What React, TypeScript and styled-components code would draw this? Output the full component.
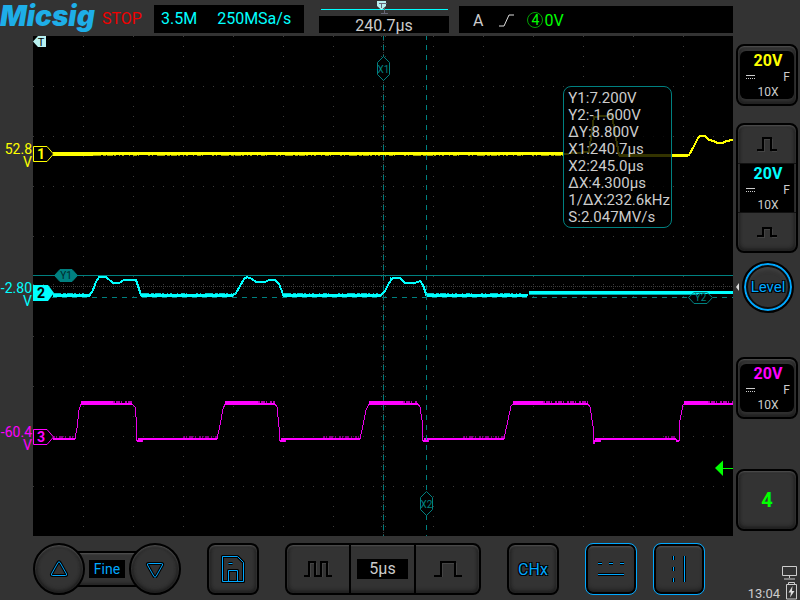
import React from "react";
import styled, { createGlobalStyle, css } from "styled-components";

const YELLOW = "#ffff00";
const CYAN = "#00ffff";
const MAGENTA = "#ff00ff";
const GREEN = "#00ff00";
const BLUE = "#00a8ff";
const TEAL = "#008080";

const GlobalStyle = createGlobalStyle`
  *, *::before, *::after { box-sizing: border-box; }
  body { margin: 0; background: #333; font-family: Roboto, "Liberation Sans", sans-serif; }
  button { font: inherit; color: inherit; padding: 0; cursor: pointer; }
  h1 { margin: 0; }
  svg { display: block; }
`;

const Page = styled.div`
  display: grid;
  grid-template-rows: 36px minmax(500px, 1fr) 64px;
  min-height: 100vh;
  background: #333;
  color: #ccc;
`;

/* ---------- header ---------- */

const Header = styled.header`
  display: grid;
  grid-template-columns: 102px 52px 150px 130px 1fr;
  padding-right: 67px;
`;

const Logo = styled.h1`
  font: italic 900 28px/32px Inter, sans-serif;
  color: #1eaee8;
`;

const RunState = styled.div`
  font-size: 16px;
  line-height: 38px;
  color: #f00000;
`;

const Readout = styled.div`
  display: flex;
  align-items: center;
  gap: 20px;
  height: 28px;
  margin-top: 5px;
  padding: 0 7px;
  background: #000;
  color: ${CYAN};
  font-size: 16px;
  line-height: 28px;
  white-space: nowrap;
`;

const Position = styled.div`
  display: flex;
  flex-direction: column;
  margin-left: 15px;
  margin-right: -15px;
`;

const PositionValue = styled.div`
  height: 17px;
  background: #000;
  font-size: 16px;
  line-height: 20px;
  text-align: center;
`;

const Trigger = styled.div`
  display: flex;
  align-items: center;
  height: 27px;
  margin: 6px 0 0 25px;
  padding: 1px 0 0 14px;
  background: #000;
  font-size: 16px;
`;

const TriggerLevel = styled.span`
  display: flex;
  align-items: center;
  gap: 1px;
  margin-left: 13px;
  color: ${GREEN};
`;

const Circled = styled.span`
  width: 16px;
  height: 16px;
  border: 1px solid #00a000;
  border-radius: 50%;
  font-size: 14px;
  line-height: 14px;
  text-align: center;
`;

const EdgeIcon = styled.svg`
  margin-left: 16px;
`;

/* ---------- main area ---------- */

const Main = styled.main`
  display: grid;
  grid-template-columns: 33px 1fr 67px;
`;

const Gutter = styled.div`
  position: relative;
`;

const LevelReading = styled.div<{ $color: string }>`
  position: absolute;
  right: 1px;
  color: ${(p) => p.$color};
  font-size: 14px;
  line-height: 13px;
  text-align: right;
`;

const Screen = styled.section`
  position: relative;
  background: #000;
`;

const Plot = styled.svg`
  position: absolute;
  inset: 0;
  width: 100%;
  height: 100%;
`;

const Measurements = styled.div`
  position: absolute;
  top: 50px;
  right: 61px;
  padding: 3px 1px 1px 4px;
  border: 1px solid ${TEAL};
  border-radius: 8px;
  background: rgba(0, 0, 0, 0.8);
  font-size: 15px;
  line-height: 17px;
  white-space: nowrap;
`;

const Side = styled.aside`
  display: grid;
  grid-template-rows: 79px 138px 96px 112px 62px;
  align-items: start;
  padding: 8px 2px 0 3px;
`;

const raised = css`
  border: 2px solid #000;
  border-radius: 8px;
  background: #333;
  box-shadow: inset 0 1px 2px #555, inset 0 -2px 4px #1c1c1c, inset 2px 0 3px #262626, inset -2px 0 3px #262626;
`;

const ChannelButton = styled.button<{ $color: string }>`
  ${raised}
  width: 62px;
  height: 62px;
  display: grid;
  place-items: center;
  color: ${(p) => p.$color};
  font-size: 20px;
  font-weight: 700;
`;

const ChannelInfo = styled.span<{ $color: string; $square?: boolean }>`
  display: grid;
  grid-template-columns: 1fr 1fr;
  align-items: center;
  width: 54px;
  height: 48px;
  padding: 1px 4px 0 6px;
  border-radius: ${(p) => (p.$square ? "0" : "6px")};
  background: #000;
  color: #ccc;
  font-size: 12px;
  font-weight: 400;
  line-height: 14px;

  strong {
    grid-column: 1 / -1;
    color: ${(p) => p.$color};
    font-size: 16px;
    line-height: 18px;
    text-align: center;
  }
  em {
    font-style: normal;
    text-align: right;
  }
  small {
    grid-column: 1 / -1;
    font-size: 12px;
    line-height: 14px;
    text-align: center;
  }
`;

const ChannelStack = styled.div`
  ${raised}
  width: 62px;
  height: 130px;
  display: grid;
  grid-template-rows: 1fr 50px 1fr;
`;

const StackButton = styled.button`
  display: grid;
  place-items: center;
  border: 0;
  background: transparent;
`;

const StackMiddle = styled(StackButton)`
  border: solid #111;
  border-width: 1px 0;
`;

const LevelRow = styled.div`
  display: flex;
  align-items: center;
`;

const LevelKnob = styled.button`
  width: 52px;
  height: 52px;
  margin-left: 3px;
  border: 2px solid #000;
  border-radius: 50%;
  background: #333;
  box-shadow: inset 0 0 0 2px ${BLUE}, inset 0 0 0 4px #0c0c0c, inset 0 6px 4px #444;
  color: ${BLUE};
  font-size: 15px;
  text-shadow: 1px 1px 0 #000, -1px -1px 0 #000, 1px -1px 0 #000, -1px 1px 0 #000;
`;

/* ---------- toolbar ---------- */

const Toolbar = styled.footer`
  display: flex;
  align-items: center;
  gap: 26px;
  height: 64px;
  padding: 2px 2px 0 33px;
`;

const KnobPair = styled.div`
  display: flex;
  align-items: center;
`;

const RoundButton = styled.button`
  ${raised}
  width: 52px;
  height: 52px;
  border-radius: 50%;
  display: grid;
  place-items: center;
  z-index: 1;
`;

const KnobBridge = styled.div`
  width: 60px;
  height: 36px;
  margin: 0 -8px;
  border: solid #000;
  border-width: 2px 0;
  box-shadow: inset 0 1px 2px #555, inset 0 -2px 3px #222;
  display: grid;
  place-items: center;
`;

const Field = styled.span<{ $accent?: boolean }>`
  padding: 0 ${(p) => (p.$accent ? "5px" : "12px")};
  background: #000;
  color: ${(p) => (p.$accent ? BLUE : "#ccc")};
  font-size: ${(p) => (p.$accent ? "14px" : "16px")};
  line-height: ${(p) => (p.$accent ? "18px" : "20px")};
`;

const ToolButton = styled.button<{ $active?: boolean }>`
  ${raised}
  width: 52px;
  height: 52px;
  display: grid;
  place-items: center;
  color: ${BLUE};
  font-size: 16px;
  text-shadow: 1px 1px 0 #000, -1px -1px 0 #000, 1px -1px 0 #000, -1px 1px 0 #000;
  ${(p) => p.$active && css`
    border: 1px solid ${BLUE};
    box-shadow: inset 0 0 0 2px #000, inset 0 3px 2px #555, inset 0 -4px 4px #1c1c1c;
  `}
`;

const TimeGroup = styled.div`
  ${raised}
  display: grid;
  grid-template-columns: 62px 65px 65px;
  height: 52px;
`;

const TimeCell = styled(StackButton)`
  & + & { border-left: 2px solid #000; }
`;

const ActivePair = styled.div`
  display: flex;
  gap: 16px;
`;

const Status = styled.div`
  display: flex;
  align-items: flex-end;
  align-self: flex-end;
  margin-left: auto;
  font-size: 13px;
  line-height: 13px;
`;

/* ---------- drawings ---------- */

const CH1 = "M20 118H530L556 116L561 81L579 79L586 119H656L661 110L665 102L667 100H672L676 104L681 105L684 107H690L693 105L700 104";
const CH2 =
  "M20 259H57L60 254L63 246L66 241H73L80 247H86L91 244H103L105 250L108 259H200L203 257L207 250L211 243L214 241L219 243L223 246H232L236 244H242L246 248L250 258V259H348L352 255L356 247L360 242H367L372 247H382L387 245L390 249L393 258V259H495";
const CH3 =
  "M20 403H42L44 392L46 374L48 368H99L102 371L103 381L104 405H109V403H184L187 389L190 373L192 368H242L244 371L246 391L247 405H252V403H327L330 389L333 374L336 368H385L387 371L389 384L390 405H395V403H471L475 384L478 370L480 368H555L557 371L560 390L561 408L562 405H567V403H643L644 405H646L647 384L650 369L651 368H700";

const GRID_X = Array.from({ length: 13 }, (_, i) => (i + 1) * 50);
const GRID_Y = Array.from({ length: 9 }, (_, i) => (i + 1) * 50);
const NOISE = "8 2 3 1 6 1 2 3 1 2 2 5 1 3 4 1 1 9 2 2 1 4";

function Waveforms() {
  return (
    <Plot viewBox="0 0 700 500" preserveAspectRatio="none" fill="none" role="img" aria-label="Waveforms">
      <g stroke="#3c3c3c" shapeRendering="crispEdges">
        {GRID_X.map((x) => (
          <path key={x} d={`M${x + 0.5} 0V500`} strokeDasharray="1 9" />
        ))}
        {GRID_Y.map((y) => (
          <path key={y} d={`M0 ${y + 0.5}H700`} strokeDasharray="1 9" />
        ))}
        <path d="M0 250.5H700M350.5 0V500" strokeDasharray="1 1" />
        <path d="M0 248.5H700M0 252.5H700M348.5 0V500M352.5 0V500" strokeDasharray="1 9" />
      </g>

      <g stroke={YELLOW} shapeRendering="crispEdges">
        <path d={CH1} strokeWidth="2" />
        <path d="M20 116.5H530" />
        <path d="M20 119.5H60" />
        <path d="M60 119.5H530" stroke="#a8a800" strokeDasharray={NOISE} />
        <path d="M586 120.5H655" />
      </g>

      <g stroke={CYAN} shapeRendering="crispEdges">
        <path d={CH2} strokeWidth="2" />
        <path d="M20 259.5H57M108 259.5H200M250 259.5H348M393 259.5H494" strokeWidth="3" />
        <path d="M496 256.5H700" strokeWidth="3" />
        <path d="M496 258.5H665" stroke="#00a0a0" />
        <path d="M20 257.5H57M108 257.5H203M250 257.5H350M393 257.5H493" stroke="#00c8c8" strokeDasharray={NOISE} />
        <path d="M69.5 242V239M357.5 245V241" />
      </g>

      <g stroke={MAGENTA} shapeRendering="crispEdges">
        <path d={CH3} stroke="#e800e8" />
        <path
          d="M20 403H42M105 403H184M248 403H327M391 403H471M562 403H643M48 368H99M192 368H242M336 368H385M480 368H555M651 368H700"
          strokeWidth="2"
        />
        <path d="M104 405H109M247 405H252M390 405H395M561 405H567M643 405H646" strokeWidth="2" />
        <path d="M48 366H80M192 366H225M336 366H370M480 366H510M651 366H675" strokeWidth="2" />
        <path d="M80 366H100M225 366H242M370 366H385M510 366H556M675 366H700" strokeWidth="2" stroke="#b800b8" strokeDasharray="2 1 4 1 1 3" />
        <path d="M20 401H42M150 401H184M290 401H327M430 401H471M632 401H643" strokeWidth="2" stroke="#800080" strokeDasharray="2 1 1 2 4 2 1 3" />
      </g>

      <g stroke={TEAL} shapeRendering="crispEdges">
        <path d="M0 239.5H700" />
        <path d="M0 261.5H655M680 261.5H700M350.5 0V500M393.5 0V500" strokeDasharray="5 5" strokeDashoffset="1" />
      </g>

      <g stroke={TEAL} fontFamily="Roboto, sans-serif" fontSize="10" textAnchor="middle">
        <path d="M350.5 20.5L356.5 26.5V38.5L350.5 44.5L344.5 38.5V26.5Z" fill="#000" />
        <text x="350.5" y="37" fill={TEAL} stroke="none">X1</text>
        <path d="M393.5 455.5L399.5 461.5V473.5L393.5 479.5L387.5 473.5V461.5Z" fill="#000" />
        <text x="393.5" y="472" fill={TEAL} stroke="none">X2</text>
        <path d="M21.5 239.5L27 233.5H39L44.5 239.5L39 245.5H27Z" fill={TEAL} />
        <text x="33" y="243" fill="#002828" stroke="none">Y1</text>
        <path d="M655.5 261.5L661 256.5H674L679.5 261.5L674 267.5H661Z" />
        <text x="667.5" y="265" fill={TEAL} stroke="none">Y2</text>
      </g>

      <g fontFamily="Roboto, sans-serif" fontSize="14" fontWeight="700" textAnchor="middle">
        <path d="M.5 110.5H14L20.5 118L14 125.5H.5Z" fill="#000" stroke={YELLOW} />
        <text x="8" y="123" fill={YELLOW}>1</text>
        <path d="M0 249H15L21 257L15 265H0Z" fill={CYAN} />
        <text x="8" y="262" fill="#000">2</text>
        <path d="M.5 393.5H14L20.5 401L14 408.5H.5Z" fill="#000" stroke={MAGENTA} />
        <text x="8" y="406" fill={MAGENTA}>3</text>
      </g>

      <path d="M0 5.5L5 0H13V11H5Z" fill="#b8f0f0" />
      <text x="8" y="10" fontFamily="Roboto, sans-serif" fontSize="11" textAnchor="middle" fill="#000">T</text>
      <path d="M682 432L690 424.5V440Z" fill={GREEN} />
      <path d="M690 432.5H700" stroke={GREEN} shapeRendering="crispEdges" />
    </Plot>
  );
}

function PulseIcon({ d, width }: { d: string; width: number }) {
  return (
    <svg width={width} height="16" viewBox={`0 0 ${width} 16`} fill="none" shapeRendering="crispEdges" aria-hidden="true">
      <path d={d} stroke="#444" transform="translate(1 1)" />
      <path d={d} stroke="#000" strokeWidth="2" />
    </svg>
  );
}

const SINGLE = "M0 14H6V2H14V14H20";
const SMALL = "M0 12H6V4H14V12H20";
const WIDE = "M0 15H7V1H21V15H28";
const DOUBLE = "M0 15H5V1H11V15H17V1H23V15H28";

function Coupling() {
  return (
    <svg width="9" height="6" viewBox="0 0 9 6" stroke="#ccc" shapeRendering="crispEdges" aria-label="DC">
      <path d="M0 1.5H9" />
      <path d="M0 4.5H9" strokeDasharray="1 1" />
    </svg>
  );
}

function Info({ color, square }: { color: string; square?: boolean }) {
  return (
    <ChannelInfo $color={color} $square={square}>
      <strong>20V</strong>
      <Coupling />
      <em>F</em>
      <small>10X</small>
    </ChannelInfo>
  );
}

function Outlined({ d, width, height }: { d: string; width: number; height: number }) {
  return (
    <svg width={width} height={height} viewBox={`0 0 ${width} ${height}`} fill="none" strokeLinejoin="round" aria-hidden="true">
      <path d={d} stroke="#000" strokeWidth="3" />
      <path d={d} stroke={BLUE} strokeWidth="1" />
    </svg>
  );
}

const READINGS = [
  { color: YELLOW, value: "52.8", y: 107 },
  { color: CYAN, value: "-2.80", y: 246 },
  { color: MAGENTA, value: "-60.4", y: 390 },
];

const MEASURES = ["Y1:7.200V", "Y2:-1.600V", "ΔY:8.800V", "X1:240.7µs", "X2:245.0µs", "ΔX:4.300µs", "1/ΔX:232.6kHz", "S:2.047MV/s"];

export default function App() {
  return (
    <>
      <GlobalStyle />
      <Page>
        <Header>
          <Logo>Micsig</Logo>
          <RunState>STOP</RunState>
          <Readout>
            <span>3.5M</span>
            <span>250MSa/s</span>
          </Readout>
          <Position>
            <svg width="130" height="16" viewBox="0 0 130 16" aria-hidden="true">
              <path d="M2 9.5H129" stroke={CYAN} shapeRendering="crispEdges" />
              <path d="M58 1H67V6L62.5 10L58 6Z" fill="#b8f0f0" />
              <path d="M60 3.5H65M62.5 3V8M65 3.5H68M65.5 8V13M62 13.5H69" stroke="#667" fill="none" />
            </svg>
            <PositionValue>240.7µs</PositionValue>
          </Position>
          <Trigger>
            <span>A</span>
            <EdgeIcon width="15" height="13" viewBox="0 0 15 13" fill="none" stroke="#ddd" aria-label="Rising edge">
              <path d="M0 12H5L10 1H15" />
            </EdgeIcon>
            <TriggerLevel>
              <Circled>4</Circled>0V
            </TriggerLevel>
          </Trigger>
        </Header>

        <Main>
          <Gutter>
            {READINGS.map((r) => (
              <LevelReading key={r.value} $color={r.color} style={{ top: `${r.y / 5}%` }}>
                {r.value}
                <br />V
              </LevelReading>
            ))}
          </Gutter>
          <Screen>
            <Waveforms />
            <Measurements>
              {MEASURES.map((m) => (
                <div key={m}>{m}</div>
              ))}
            </Measurements>
          </Screen>
          <Side>
            <ChannelButton $color={YELLOW} aria-label="Channel 1">
              <Info color={YELLOW} />
            </ChannelButton>
            <ChannelStack>
              <StackButton aria-label="Increase scale">
                <PulseIcon d={SINGLE} width={20} />
              </StackButton>
              <StackMiddle aria-label="Channel 2">
                <Info color={CYAN} square />
              </StackMiddle>
              <StackButton aria-label="Decrease scale">
                <PulseIcon d={SMALL} width={20} />
              </StackButton>
            </ChannelStack>
            <LevelRow>
              <svg width="3" height="8" viewBox="0 0 3 8" aria-hidden="true">
                <path d="M3 0V8L0 4Z" fill="#ddd" />
              </svg>
              <LevelKnob>Level</LevelKnob>
            </LevelRow>
            <ChannelButton $color={MAGENTA} aria-label="Channel 3">
              <Info color={MAGENTA} />
            </ChannelButton>
            <ChannelButton $color={GREEN}>4</ChannelButton>
          </Side>
        </Main>

        <Toolbar>
          <KnobPair>
            <RoundButton aria-label="Up">
              <Outlined width={20} height={18} d="M9 2.5Q10 1 11 2.5L17.5 14Q18 15.5 16.5 15.5H3.5Q2 15.5 2.5 14Z" />
            </RoundButton>
            <KnobBridge>
              <Field $accent>Fine</Field>
            </KnobBridge>
            <RoundButton aria-label="Down">
              <Outlined width={20} height={18} d="M9 16.5Q10 18 11 16.5L17.5 5Q18 3.500 16.500 3.500H3.500Q2 3.500 2.500 5Z" />
            </RoundButton>
          </KnobPair>
          <ToolButton aria-label="Save">
            <Outlined
              width={26}
              height={30}
              d="M2.5 2.5H17.5L23.5 8.5V27.5H2.5ZM8.5 27.5V16.5H17.5V27.5M8.5 9.5H12.5"
            />
          </ToolButton>
          <TimeGroup>
            <TimeCell aria-label="Shorter time base">
              <PulseIcon d={DOUBLE} width={28} />
            </TimeCell>
            <TimeCell aria-label="Time base">
              <Field>5µs</Field>
            </TimeCell>
            <TimeCell aria-label="Longer time base">
              <PulseIcon d={WIDE} width={28} />
            </TimeCell>
          </TimeGroup>
          <ToolButton>CHx</ToolButton>
          <ActivePair>
            <ToolButton $active aria-label="Horizontal cursors">
              <Outlined width={30} height={16} d="M2 2.5H6M13 2.5H17M24 2.5H28M2 13.5H28" />
            </ToolButton>
            <ToolButton $active aria-label="Vertical cursors">
              <Outlined width={16} height={30} d="M2.5 2V6M2.5 13V17M2.5 24V28M13.5 2V28" />
            </ToolButton>
          </ActivePair>
          <Status>
            <time>13:04</time>
            <svg width="18" height="35" viewBox="0 0 18 35" fill="none" stroke="#ccc" aria-label="Network and battery">
              <path d="M2.5 1.5H16.5V10.5H2.5ZM9.500 10.5V13M4 14H15" />
              <path d="M6.5 19.5H16.5V34H6.5ZM8.500 19V17.5H14.5V19" />
              <path d="M12.5 21L8.500 27.5H11L10 32.5L14.5 26H12Z" fill="#ddd" stroke="none" />
            </svg>
          </Status>
        </Toolbar>
      </Page>
    </>
  );
}
